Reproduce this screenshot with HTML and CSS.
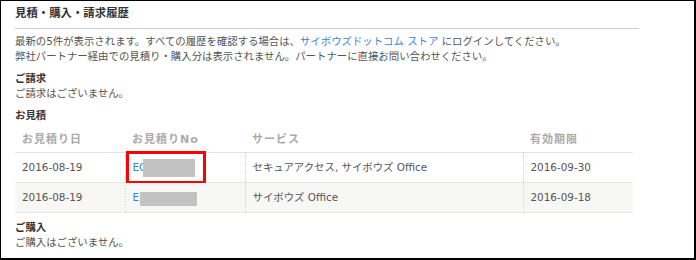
FILE: index.html
```html
<!DOCTYPE html>
<html lang="ja">
<head>
  <meta charset="UTF-8">
  <meta name="viewport" content="width=device-width, initial-scale=1.0">
  <title>見積・購入・請求履歴</title>
  <link rel="stylesheet" href="styles.css">
</head>
<body>
  <div class="frame">
    <h2 class="title">見積・購入・請求履歴</h2>
    <p class="note">
      最新の5件が表示されます。すべての履歴を確認する場合は、<a href="#">サイボウズドットコム ストア</a> にログインしてください。<br>
      弊社パートナー経由での見積り・購入分は表示されません。パートナーに直接お問い合わせください。
    </p>

    <div class="section">
      <h3>ご請求</h3>
      <p>ご請求はございません。</p>
    </div>

    <div class="section">
      <h3>お見積</h3>
      <table class="history">
        <thead>
          <tr>
            <th class="c-date">お見積り日</th>
            <th class="c-no">お見積りNo</th>
            <th class="c-service">サービス</th>
            <th class="c-limit">有効期限</th>
          </tr>
        </thead>
        <tbody>
          <tr>
            <td>2016-08-19</td>
            <td class="no-cell">
              <a href="#">EC</a>
              <span class="redact redact-1"></span>
              <span class="mark"></span>
            </td>
            <td>セキュアアクセス, サイボウズ Office</td>
            <td>2016-09-30</td>
          </tr>
          <tr class="alt">
            <td>2016-08-19</td>
            <td class="no-cell">
              <a href="#">E</a>
              <span class="redact redact-2"></span>
            </td>
            <td>サイボウズ Office</td>
            <td>2016-09-18</td>
          </tr>
        </tbody>
      </table>
    </div>

    <div class="section">
      <h3>ご購入</h3>
      <p>ご購入はございません。</p>
    </div>
  </div>
</body>
</html>
```

FILE: styles.css
```css
body {
  margin: 0;
  padding: 0;
  background-color: #fff;
  font-family: "DejaVu Sans", "Noto Sans CJK JP", sans-serif;
  font-size: 10.4px;
  color: #555;
}
.frame {
  box-sizing: border-box;
  width: 696px;
  height: 260px;
  border-style: solid;
  border-color: #000;
  border-width: 1px 2px 2px 1px;
  padding: 0 55px 0 14px;
  overflow: hidden;
}
.title {
  margin: 0;
  padding: 4px 0 7px;
  font-size: 11.4px;
  line-height: 16px;
  font-weight: bold;
  color: #333;
  border-bottom: 1px solid #ccc;
}
.note {
  margin: 5px 0 0;
  line-height: 15px;
}
a {
  color: #3b86d4;
  text-decoration: none;
}
.section {
  margin-top: 7px;
}
.section h3 {
  margin: 0;
  font-size: 10.4px;
  line-height: 15px;
  font-weight: bold;
  color: #333;
}
.section p {
  margin: 0;
  line-height: 15px;
}
.history {
  width: 618px;
  border-collapse: collapse;
  table-layout: fixed;
}
.history th {
  height: 29px;
  padding: 0 0 0 7px;
  text-align: left;
  font-size: 11px;
  font-weight: bold;
  letter-spacing: 1px;
  color: #aaa;
  border-bottom: 1px solid #e2e2e2;
}
.history td {
  height: 29px;
  padding: 0 0 0 7px;
  line-height: 15px;
  border-bottom: 1px solid #e6e6e6;
  border-left: 1px dotted #d0d0d0;
  white-space: nowrap;
}
.history td:first-child {
  border-left: none;
}
.c-date { width: 103px; }
.c-no { width: 113px; }
.c-service { width: 271px; }
.c-limit { width: 103px; }
.alt td {
  background-color: #f7f7f6;
}
.no-cell {
  position: relative;
}
.redact {
  position: absolute;
  background-color: #c2c2c2;
}
.redact-1 {
  left: 17px;
  top: 6px;
  width: 52px;
  height: 18px;
}
.redact-2 {
  left: 14px;
  top: 9px;
  width: 57px;
  height: 14px;
}
.mark {
  position: absolute;
  box-sizing: border-box;
  left: 0;
  top: -2px;
  width: 80px;
  height: 33px;
  border: 3px solid #f00;
}
```
